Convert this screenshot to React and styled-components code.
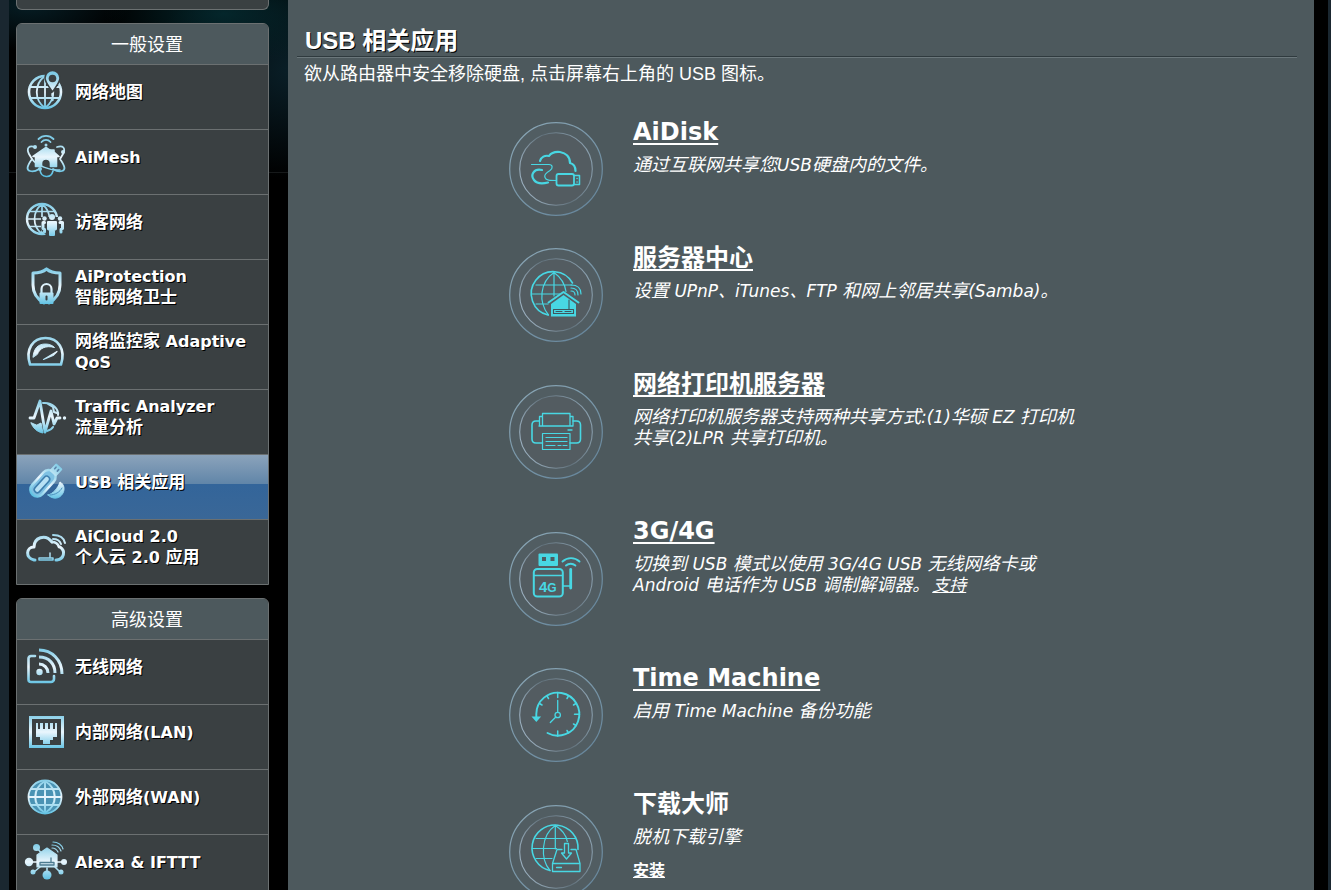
import React from 'react';
import styled, { createGlobalStyle, css } from 'styled-components';

const GlobalStyle = createGlobalStyle`
  * {
    box-sizing: border-box;
    margin: 0;
    padding: 0;
  }
  html {
    overflow: hidden;
  }
  body {
    height: 100vh;
    overflow: hidden;
    background: #1a2730;
    color: #fff;
    font-family: "DejaVu Sans", "Noto Sans CJK SC", sans-serif;
  }
`;

const Page = styled.div`
  display: flex;
  align-items: stretch;
  height: 100vh;
  overflow: hidden;
  margin: 0 3px 0 9px;
  padding: 0 14px 0 7px;
  background-color: #000;
  background-image:
    linear-gradient(to bottom, transparent 172px, #16191a 172px, #16191a 173px, transparent 173px),
    radial-gradient(ellipse 120px 50px at 215px 14px, #04262b, transparent),
    radial-gradient(ellipse 150px 110px at 290px 70px, #0a2029, transparent),
    radial-gradient(ellipse 100px 45px at 20px 5px, #061d24, transparent);
  background-size: 279px 100%;
  background-repeat: no-repeat;
`;

const Sidebar = styled.nav`
  flex: 0 0 253px;
  margin-right: 19px;
`;

const panelBorder = '1px solid #6b7071';

const Panel = styled.section`
  margin-bottom: 13px;
  border: ${panelBorder};
  border-radius: 6px 6px 0 0;
  background: #3a4042;
  overflow: hidden;
`;

const PanelEnd = styled.div`
  height: 10px;
  margin-bottom: 13px;
  border: ${panelBorder};
  border-top: none;
  border-radius: 0 0 6px 6px;
  background: #3a4042;
`;

const PanelTitle = styled.h2`
  height: 40px;
  line-height: 41px;
  padding-left: 9px;
  background: #4d595d;
  font-size: 18px;
  font-weight: 400;
  text-align: center;
`;

const MenuItem = styled.a`
  display: flex;
  align-items: center;
  height: 65px;
  padding: 0 8px 10px 9px;
  border-top: ${panelBorder};
  color: #fff;
  font-size: 16px;
  font-weight: 700;
  line-height: 21px;
  text-decoration: none;
  text-shadow: 1px 1px 0 #000;
  ${({ $active }) => $active && css`
    background: linear-gradient(to bottom, #8ba3bb 0, #6085a8 46%, #33659a 46%, #3a6797 100%);
  `}
  & svg {
    flex: none;
    width: 40px;
    height: 40px;
    margin-right: 9px;
    overflow: visible;
    fill: none;
    stroke: url(#ice);
    stroke-width: 2;
    stroke-linecap: round;
    stroke-linejoin: round;
  }
`;

const MenuLabel = styled.span`
  white-space: pre-line;
`;

const HanMenu = styled.span`
  font-size: 17px;
`;

const Main = styled.main`
  flex: 1;
  min-width: 0;
  padding: 24px 17px 0 9px;
  background: #4d595d;
`;

const Heading = styled.h1`
  height: 34px;
  padding-left: 8px;
  border-bottom: 1px solid #6b777b;
  box-shadow: inset 0 -1px 0 #2f3a3e;
  font-family: "Liberation Sans", "Noto Sans CJK SC", sans-serif;
  font-size: 24px;
  line-height: 33px;
  text-shadow: 1px 1px 0 #000;
`;

const Intro = styled.p`
  padding: 4px 0 0 7px;
  font-family: "Liberation Sans", "Noto Sans CJK SC", sans-serif;
  font-size: 18px;
  line-height: 24px;
`;

const AppList = styled.ul`
  max-width: 576px;
  margin: 20px auto 0;
  list-style: none;
`;

const AppRow = styled.li`
  display: grid;
  grid-template-columns: 94px 1fr;
  column-gap: 30px;
  align-items: center;
`;

const AppText = styled.div`
  padding: 13px 0 44px;
`;

const AppTitle = styled.h3`
  margin-bottom: 10px;
  font-size: 24px;
  line-height: 26px;
  & a {
    color: inherit;
    text-underline-offset: 3px;
    text-decoration-thickness: 2px;
  }
`;

const AppDesc = styled.p`
  margin-bottom: 12px;
  font-size: 17px;
  font-style: italic;
  line-height: 21px;
  & a {
    margin-left: 3px;
    color: inherit;
  }
`;

const HanDesc = styled.span`
  font-size: 18px;
  line-height: 20px;
`;

const InstallLink = styled.a`
  display: block;
  color: #fff;
  font-size: 16px;
  font-weight: 700;
  line-height: 21px;
`;

const AppIcon = styled.svg`
  display: block;
  width: 94px;
  height: 94px;
  fill: none;
  stroke: #48d7e3;
  stroke-width: 1.6;
  stroke-linecap: round;
  stroke-linejoin: round;
`;

const Defs = styled.svg`
  position: absolute;
  width: 0;
  height: 0;
`;

const Gradients = () => (
  <Defs aria-hidden="true">
    <defs>
      <linearGradient id="ice" gradientUnits="userSpaceOnUse" x1="0" y1="2" x2="0" y2="38">
        <stop offset="0" stopColor="#7fcbe6" />
        <stop offset="0.5" stopColor="#eaf6fd" />
        <stop offset="1" stopColor="#59bfe2" />
      </linearGradient>
      <linearGradient id="ring" gradientUnits="userSpaceOnUse" x1="10" y1="0" x2="84" y2="94">
        <stop offset="0" stopColor="#8aa6b5" />
        <stop offset="0.5" stopColor="#7896a8" />
        <stop offset="1" stopColor="#64849a" />
      </linearGradient>
      <linearGradient id="innerRing" gradientUnits="userSpaceOnUse" x1="10" y1="60" x2="84" y2="30">
        <stop offset="0" stopColor="#9fb4c4" />
        <stop offset="0.5" stopColor="#62727c" />
        <stop offset="1" stopColor="#8ea4b3" />
      </linearGradient>
    </defs>
  </Defs>
);

const ICE = 'url(#ice)';
const BG = '#3a4042';

/* ---- sidebar icons, 40 x 40 ---- */

const MapIcon = () => (
  <svg viewBox="0 0 40 40">
    <circle cx="19" cy="20" r="16" strokeWidth="2.6" />
    <path d="M19 4v32M3.5 15h31M4 26h30M19 4C8 12 8 28 19 36M19 4c11 8 11 24 0 32" strokeWidth="1.8" />
    <path d="M26.5 20C22 13 19 10 19 6a7.5 7.5 0 0 1 15 0c0 4-3 7-7.5 14z" fill={ICE} stroke={BG} strokeWidth="1.6" />
    <circle cx="26.5" cy="6.5" r="3.8" fill={BG} stroke="none" />
    <path d="M26.5 22v1.5M26.5 27v1" strokeWidth="2.4" />
  </svg>
);

const MeshIcon = () => (
  <svg viewBox="0 0 40 40">
    <path d="M9 10C3 8 0 11 3 17l3 5c-5 7-6 11-2 12 3 1 6 0 9-2M31 10c6-2 9 1 6 7l-3 5c5 7 6 11 2 12-3 1-6 0-9-2" strokeWidth="1.8" />
    <path d="M14 33c1 8 11 9 13 1M6 22c4 6 18 12 28 11" strokeWidth="1.6" />
    <path d="M20 10.5L7 19.500h2.500v10h6v-3a4.500 4.500 0 0 1 9 0v3h6v-10H33L28 15v-2h-3v1z" fill={ICE} strokeWidth="1.6" />
    <path d="M15.500 5a6 6 0 0 1 9 0M12.500 2a10.500 10.500 0 0 1 15 0" strokeWidth="1.800" />
    <circle cx="20" cy="8" r="1.500" fill={ICE} stroke="none" />
    <circle cx="9" cy="10" r="1" fill={ICE} />
    <circle cx="37" cy="15" r="1" fill={ICE} />
    <circle cx="14" cy="32" r="1" fill={ICE} />
  </svg>
);

const GuestIcon = () => (
  <svg viewBox="0 0 40 40">
    <circle cx="16" cy="17" r="15" strokeWidth="2.4" />
    <path d="M16 2v30M1 17h30M3.5 9.5h25M3.5 24.5h25M16 2C6 10 6 24 16 32M16 2c10 8 10 22 0 30" strokeWidth="1.7" />
    <path d="M15 15h24v15l-8 5h-9l-7-7z" fill={BG} stroke="none" />
    <circle cx="26" cy="15" r="3" fill={ICE} stroke="none" />
    <circle cx="18.5" cy="16.500" r="2.200" fill={ICE} stroke="none" />
    <circle cx="34" cy="16.500" r="2.200" fill={ICE} stroke="none" />
    <path d="M22 20h8v7l-2 1v5h-4v-5l-2-1z" fill={ICE} strokeWidth="2" />
    <path d="M18.500 20.500h-1.500v6l1.500 1v2.500M34 20.500h2.500v6l-1.500 1v2.500" strokeWidth="3" />
  </svg>
);

const ShieldIcon = () => (
  <svg viewBox="0 0 40 40">
    <path d="M20.500 2c-4 3.500-9 4-13.500 4v12c0 9 5 14.500 11 18M20.500 2c4 3.500 9 4 13.500 4v12c0 9-5 14.500-11 18" strokeWidth="3" />
    <path d="M15.500 26v-4a5 5 0 0 1 10 0v4" strokeWidth="2.200" />
    <rect x="13.500" y="25.500" width="14" height="11.500" rx="1" fill={ICE} stroke="none" />
    <path d="M20.500 29.500v3" stroke={BG} strokeWidth="2" />
  </svg>
);

const GaugeIcon = () => (
  <svg viewBox="0 0 40 40">
    <path d="M4 32.500C-1 17 7 6 19.500 6S40 17 35 32.500z" strokeWidth="2.600" />
    <path d="M7 25C8 16 12 12 19.500 12c4 0 7 1.500 9 3.500-9-2.500-15 1-17 6.500z" fill={ICE} strokeWidth="1" />
    <path d="M17.500 27.500L31 19.500l-4 4z" fill={ICE} strokeWidth="1.200" />
  </svg>
);

const TrafficIcon = () => (
  <svg viewBox="0 0 40 40">
    <path d="M4 21h4L14 4l5 31 6-21 3 13 3-6h3" strokeWidth="2.800" />
    <path d="M17 6c10-1 16 7 15 12M22 7l5 3 1 5 3 1" strokeWidth="2" />
    <path d="M5 26c2 5 6 9 12 10l-2-10-4 2z" fill={ICE} strokeWidth="1" />
    <path d="M21 34c3-1 5-2 6-4" strokeWidth="2" />
    <path d="M38.500 21v0.100" strokeWidth="3.400" />
  </svg>
);

const UsbIcon = () => (
  <svg viewBox="0 0 40 40">
    <g transform="rotate(42 17 22)">
      <rect x="9.500" y="6" width="14" height="31" rx="7" fill="#7fc1e3" strokeWidth="2.400" />
      <rect x="13.500" y="13" width="6" height="20" rx="3" fill="#b9e2f5" stroke="#3f7fae" strokeWidth="1.600" />
    </g>
    <g transform="rotate(42 29 9)">
      <rect x="24.500" y="2.500" width="9" height="10" rx="1" fill={ICE} stroke="none" />
      <path d="M27.200 5.500v2M30.800 5.500v2" stroke="#5b86ad" strokeWidth="1.600" />
    </g>
    <path d="M22 33c5-1 10-7 12-13 4 2 5 7 3 11-3 6-10 7-15 2z" fill={ICE} strokeWidth="1" />
    <path d="M24 33c5 0 10-3 12-7" stroke="#4b92bf" strokeWidth="1" />
  </svg>
);

const CloudIcon = () => (
  <svg viewBox="0 0 40 40">
    <path d="M9 33H8C-1 31 0 20 8 20c0-9 11-14 18-5M34 20c6 4 4 12-3 13h-1" strokeWidth="3" />
    <path d="M26 15c4 0 6 2 7 5" strokeWidth="2.600" />
    <path d="M13 31h14v2H13zM24 30v-4" strokeWidth="1.500" />
    <path d="M27 12c5 0 7 2 8 5M27 8c7 0 11 3 12 8" strokeWidth="2" />
  </svg>
);

const WifiIcon = () => (
  <svg viewBox="0 0 40 40">
    <path d="M9 9H5a2.500 2.500 0 0 0-2.500 2.500v21A2.500 2.500 0 0 0 5 35h20a3 3 0 0 0 3-3v-3" strokeWidth="2.600" />
    <path d="M13 3c13 0 23 10 23 24M13 10c10 0 16 7 16 16M13 17c5 0 9 4 9 9" strokeWidth="3" strokeLinecap="butt" />
    <circle cx="13.500" cy="25" r="3.200" fill={ICE} stroke="none" />
  </svg>
);

const LanIcon = () => (
  <svg viewBox="0 0 40 40">
    <rect x="4.500" y="5.500" width="32" height="29" strokeWidth="3" strokeLinejoin="miter" />
    <path d="M10 11h2v6h2v-6h3v6h2v-6h3v6h2v-6h3v6h2v-6h2v14h-4v3h-3v4h-7v-4h-3v-3h-4z" fill={ICE} stroke="none" />
  </svg>
);

const WanIcon = () => (
  <svg viewBox="0 0 40 40">
    <circle cx="19" cy="20" r="16.500" fill="#4a93b4" strokeWidth="1.800" />
    <path d="M19 4v32M3 20h32M5 12h28M5 28h28M19 4C6 12 6 28 19 36M19 4c13 8 13 24 0 32" strokeWidth="2" />
  </svg>
);

const AlexaIcon = () => (
  <svg viewBox="0 0 40 40">
    <path d="M11 6l6 7M3 20h34M8 30l6-5M21 32v-6M34 30l-5-5" strokeWidth="1.600" />
    <path d="M21 6l10 7v12H11V13z" fill={ICE} strokeWidth="1.200" />
    <path d="M14 20.500h14v2.500H14zM25 20v-4" stroke="#4d7b90" strokeWidth="1.300" />
    <circle cx="10.500" cy="5.500" r="3.500" fill={ICE} stroke="none" />
    <circle cx="3" cy="20" r="4.200" fill={ICE} stroke="none" />
    <circle cx="38" cy="20" r="3" fill={ICE} stroke="none" />
    <circle cx="7" cy="30" r="2.500" fill={ICE} stroke="none" />
    <circle cx="35" cy="30" r="2.500" fill={ICE} stroke="none" />
    <circle cx="21" cy="33" r="4.500" fill={ICE} stroke="none" />
    <path d="M26 6c3 0 5 2 6 4M26 3c5 0 8 3 9 6M27 0c5 0 9 3 10 7" strokeWidth="1.200" />
  </svg>
);

/* ---- round icons, 94 x 94 ---- */

const Round = ({ children }) => (
  <AppIcon viewBox="0 0 94 94" aria-hidden="true">
    <circle cx="47" cy="47" r="46.300" fill="#515d62" stroke="url(#ring)" strokeWidth="1.200" />
    <circle cx="47" cy="47" r="36.300" fill="#535c61" stroke="url(#innerRing)" strokeWidth="1.100" />
    {children}
  </AppIcon>
);

const DiskArt = () => (
  <Round>
    <path d="M31 39c1-4 5-6 9-5 2-3 6-4.500 11-4 6 1 10 5 10 11 4 1 5.500 4 5.500 8" strokeWidth="2.200" />
    <path d="M33 48c-8-2-12 5-8 10 3 4 8 4 14 2.500" strokeWidth="2.200" />
    <path d="M22.500 42.500H40c4 0 4 4 1 6-5 3-6 5-5 7 1 3 5 3 11 3" strokeWidth="1.200" />
    <rect x="47.500" y="52" width="17.500" height="11.500" rx="2" strokeWidth="1.800" />
    <path d="M65 53.500h5.500v9H65M68 56.500h0.100M68 60h0.100" strokeWidth="1.500" />
  </Round>
);

const ServerArt = () => (
  <Round>
    <path d="M63.500 35A22 22 0 1 0 39 67" strokeWidth="1.600" />
    <path d="M45 24.500V48M45 24.500C31 34 29 54 39.500 67M45 24.500c7 5 11 12 12 19M27 37h36M23 46h28M27 56h12" strokeWidth="1.200" />
    <path d="M39.500 54.500L54.500 44l15 10.500" strokeWidth="2" />
    <path d="M42 56l12.500-9L67 56v12.500H42z" fill="#48d7e3" stroke="none" />
    <path d="M60 52v9M44.500 61.500h20v4h-20zM47 63.500h6M56 63.500h6" stroke="#40555c" strokeWidth="1.100" />
    <path d="M62 43c3 0 4 2 4 4M62 40c5 0 7 3 7 7M62 37c7 0 10 4 10 9" strokeWidth="1.200" />
  </Round>
);

const PrinterArt = () => (
  <Round>
    <path d="M33.500 41V28.500h27.500V41M33.500 31.500h-3V41M61 31.500h3V41M30 41h34" strokeWidth="1.300" />
    <path d="M30 36h-3q-4 0-4 4v14q0 4 4 4h6.500M64 36h3.500q4 0 4 4v14q0 4-4 4H61" strokeWidth="1.600" />
    <path d="M59 45h4" strokeWidth="1.300" />
    <path d="M33.500 48.500H61v16H33.500zM37 52.500h21M37 56.500h21M37 60.500h9M49 60.500h3M54 60.500h4" strokeWidth="1.200" />
  </Round>
);

const DongleArt = () => (
  <Round>
    <rect x="29.500" y="21.500" width="19.500" height="12.500" rx="1" fill="#48d7e3" stroke="none" />
    <path d="M33 25h4v4h-4zM41.500 25h4v4h-4z" fill="#4e5c62" stroke="none" />
    <rect x="24.800" y="37" width="29" height="27.500" rx="3.500" strokeWidth="2" />
    <path d="M25 43.500h28.500" strokeWidth="1.300" />
    <text x="30" y="59.500" fill="#48d7e3" stroke="none" fontFamily="Liberation Sans, sans-serif" fontWeight="700" fontSize="15">
      4<tspan fontSize="12">G</tspan>
    </text>
    <path d="M54 54h7" strokeWidth="1.500" />
    <path d="M61.700 37.500v18.500" strokeWidth="2.800" />
    <path d="M57 33.500a7 7 0 0 1 9.400 0M53.500 29.500a12.500 12.500 0 0 1 17 0" strokeWidth="1.900" />
  </Round>
);

const ClockArt = () => (
  <Round>
    <path d="M27.300 49V46A21.500 21.500 0 1 1 38.500 65" strokeWidth="1.900" />
    <path d="M22.500 48.500h9.600L27.300 54z" fill="#48d7e3" stroke="none" />
    <path d="M48.700 24.500v5M48.700 68v-5M70.500 46.300h-5M59.500 28l-1.500 2.500M67 35.500l-2.500 1.500M67 57.500l-2.500-1.500M59.500 65l-1.500-2.500M38 28l1.500 2.500M30.500 35.500l2.500 1.500" strokeWidth="1.500" />
    <circle cx="48.700" cy="47" r="2.700" strokeWidth="1.300" />
    <path d="M48.700 44V32.500M46.800 49l-5.500 5.500" strokeWidth="1.300" />
  </Round>
);

const DownloadArt = () => (
  <Round>
    <path d="M69 44.500A23 23 0 1 0 41 65.500" strokeWidth="1.600" />
    <path d="M46.300 20.500V44M46.300 20.500C32 30 31 54 41 65.500M46.300 20.500c8 5 11 10 12 16M27 33.500h39M23.500 43.500h24M27 53.500h16" strokeWidth="1.200" />
    <path d="M53 44.500h-5L43.500 58.500v8h27.500v-8L67 44.500h-5M43.500 58.500H71M47.500 62.500h5" strokeWidth="1.300" />
    <path d="M55.500 38.500h4V48h3l-5 6-5-6h3z" strokeWidth="1.300" />
  </Round>
);

const general = [
  { icon: MapIcon, label: '网络地图' },
  { icon: MeshIcon, label: 'AiMesh' },
  { icon: GuestIcon, label: '访客网络' },
  { icon: ShieldIcon, label: 'AiProtection\n智能网络卫士' },
  { icon: GaugeIcon, label: '网络监控家 Adaptive QoS' },
  { icon: TrafficIcon, label: 'Traffic Analyzer\n流量分析' },
  { icon: UsbIcon, label: 'USB 相关应用', active: true },
  { icon: CloudIcon, label: 'AiCloud 2.0\n个人云 2.0 应用' },
];

const advanced = [
  { icon: WifiIcon, label: '无线网络' },
  { icon: LanIcon, label: '内部网络(LAN)' },
  { icon: WanIcon, label: '外部网络(WAN)' },
  { icon: AlexaIcon, label: 'Alexa & IFTTT' },
];

const apps = [
  { art: DiskArt, title: 'AiDisk', desc: '通过互联网共享您USB硬盘内的文件。' },
  { art: ServerArt, title: '服务器中心', desc: '设置 UPnP、iTunes、FTP 和网上邻居共享(Samba)。' },
  { art: PrinterArt, title: '网络打印机服务器', desc: '网络打印机服务器支持两种共享方式:(1)华硕 EZ 打印机共享(2)LPR 共享打印机。' },
  {
    art: DongleArt,
    title: '3G/4G',
    desc: '切换到 USB 模式以使用 3G/4G USB 无线网络卡或 Android 电话作为 USB 调制解调器。',
    link: '支持',
  },
  { art: ClockArt, title: 'Time Machine', desc: '启用 Time Machine 备份功能' },
  { art: DownloadArt, title: '下载大师', desc: '脱机下载引擎', install: true },
];

// Chinese runs are set one pixel larger than the latin text beside them
const Mixed = ({ text, as: Han }) => text
  .split(/([\u4e00-\u9fff]+)/)
  .map((part, i) => (i % 2 ? <Han key={i}>{part}</Han> : part));

const Menu = ({ title, items }) => (
  <Panel>
    <PanelTitle>{title}</PanelTitle>
    {items.map(({ icon: Icon, label, active }) => (
      <MenuItem key={label} href="#menu" $active={active} aria-current={active ? 'page' : undefined}>
        <Icon />
        <MenuLabel><Mixed text={label} as={HanMenu} /></MenuLabel>
      </MenuItem>
    ))}
  </Panel>
);

export default () => (
  <>
    <GlobalStyle />
    <Gradients />
    <Page>
      <Sidebar>
        <PanelEnd />
        <Menu title="一般设置" items={general} />
        <Menu title="高级设置" items={advanced} />
      </Sidebar>
      <Main>
        <Heading>USB 相关应用</Heading>
        <Intro>欲从路由器中安全移除硬盘, 点击屏幕右上角的 USB 图标。</Intro>
        <AppList>
          {apps.map(({ art: Art, title, desc, link, install }) => (
            <AppRow key={title}>
              <Art />
              <AppText>
                <AppTitle>{install ? title : <a href="#app">{title}</a>}</AppTitle>
                <AppDesc>
                  <Mixed text={desc} as={HanDesc} />
                  {link && <a href="#support">{link}</a>}
                </AppDesc>
                {install && <InstallLink href="#install">安装</InstallLink>}
              </AppText>
            </AppRow>
          ))}
        </AppList>
      </Main>
    </Page>
  </>
);
